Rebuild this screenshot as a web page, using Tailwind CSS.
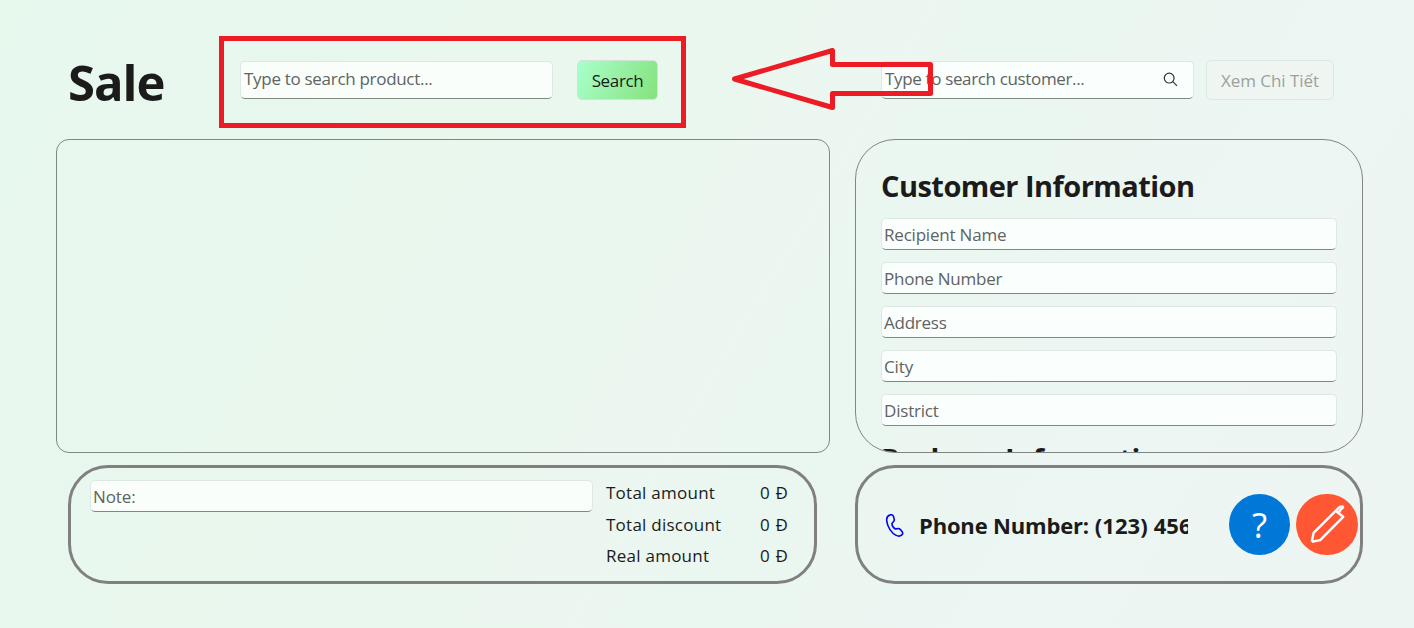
<!DOCTYPE html>
<html lang="en">
<head>
<meta charset="utf-8">
<title>Sale</title>
<script src="https://cdn.jsdelivr.net/npm/@tailwindcss/browser@4"></script>
</head>
<body class="relative h-[628px] w-[1414px] overflow-hidden bg-linear-[120deg,#e7f8ed_0%,#eaf7ee_40%,#ebf6f1_65%,#edf5f3_100%] font-['Open_Sans','Noto_Sans',sans-serif] text-[17px] leading-6 text-[#1b1b1b]">
  <div class="flex gap-[25px] pl-14">
    <main class="w-[774px]">
      <header class="flex h-[139px] pt-9">
        <h1 class="ml-3 w-[151px] pt-[11px] text-[49px] leading-[70px] font-bold tracking-[-1px] whitespace-nowrap">Sale</h1>
        <div class="flex h-[92px] w-[467px] gap-6 border-[5px] border-[#ed1c24] pt-[19px] pl-4">
          <div class="mt-px h-[38px] w-[313px] rounded-[5px] border border-[#dce8e1] border-b-[#7e8883] bg-[#f9fefb] pt-[5px] pl-[3px] whitespace-nowrap text-[#5f6361]"><span class="tracking-[-0.3px]">Type to search product...</span></div>
          <button class="h-10 w-[81px] rounded-[5px] border border-[#cfe4d6] bg-linear-[115deg,#a9ffcb,#85e27d] pt-px text-center"><span class="tracking-[-0.35px]">Search</span></button>
        </div>
      </header>
      <section class="h-[314px] rounded-[13px] border border-[#808682]"></section>
      <section class="mt-3 ml-3 flex h-[119px] w-[749px] rounded-[40px] border-[3px] border-[#808080] pt-3 pl-[19px]">
        <div class="h-8 w-[503px] rounded-[5px] border border-[#dce8e1] border-b-[#7e8883] bg-[#f9fefb] pt-1 pl-[2px] leading-6 text-[#5f6361]"><span class="tracking-[-0.1px]">Note:</span></div>
        <dl class="mt-px ml-[13px] grid h-[95px] w-[183px] grid-cols-[154px_1fr] grid-rows-3 whitespace-nowrap">
          <dt><span class="tracking-[0.25px]">Total amount</span></dt><dd><span class="tracking-[0.7px]">0 Đ</span></dd>
          <dt><span class="tracking-[0.25px]">Total discount</span></dt><dd><span class="tracking-[0.7px]">0 Đ</span></dd>
          <dt><span class="tracking-[0.25px]">Real amount</span></dt><dd><span class="tracking-[0.7px]">0 Đ</span></dd>
        </dl>
      </section>
    </main>

    <aside class="w-[508px]">
      <header class="flex h-[139px] gap-3 pt-[60px] pl-[26px]">
        <div class="mt-px flex h-[38px] w-[313px] justify-between rounded-[5px] border border-[#dce8e1] border-b-[#7e8883] bg-[#fafefd] pt-[5px] pr-[15px] pl-[3px] whitespace-nowrap text-[#5f6361]">
          <span class="tracking-[-0.35px]">Type to search customer...</span>
          <svg class="mt-[5px] size-[15px]" viewBox="0 0 15 15" fill="none" stroke="#333" stroke-width="1.2"><circle cx="6.2" cy="6.1" r="4.9"/><path d="M9.8 9.7 14 13.9"/></svg>
        </div>
        <button class="h-10 w-32 rounded-[5px] border border-[#dce8e2] bg-[#eff6f2] pt-px text-center whitespace-nowrap text-[#9ca09e]" disabled><span class="tracking-[-0.05px]">Xem Chi Tiết</span></button>
      </header>
      <section class="h-[314px] overflow-hidden rounded-[40px] border border-[#808682] pt-[26px] pl-[25px]">
        <h2 class="h-[52px] text-[29px] leading-10 font-bold tracking-[-0.54px] whitespace-nowrap">Customer Information</h2>
        <div class="flex w-[456px] flex-col gap-3 text-[#5f6361]">
          <div class="h-8 rounded-[5px] border border-[#dce8e1] border-b-[#7e8883] bg-[#fafefd] pt-1 pl-[2px]"><span class="tracking-[-0.2px]">Recipient Name</span></div>
          <div class="h-8 rounded-[5px] border border-[#dce8e1] border-b-[#7e8883] bg-[#fafefd] pt-1 pl-[2px]"><span class="tracking-[-0.25px]">Phone Number</span></div>
          <div class="h-8 rounded-[5px] border border-[#dce8e1] border-b-[#7e8883] bg-[#fafefd] pt-1 pl-[2px]"><span class="tracking-[-0.25px]">Address</span></div>
          <div class="h-8 rounded-[5px] border border-[#dce8e1] border-b-[#7e8883] bg-[#fafefd] pt-1 pl-[2px]"><span class="tracking-[-0.1px]">City</span></div>
          <div class="h-8 rounded-[5px] border border-[#dce8e1] border-b-[#7e8883] bg-[#fafefd] pt-1 pl-[2px]"><span class="tracking-[-0.2px]">District</span></div>
        </div>
        <h2 class="mt-[13px] text-[29px] leading-10 font-bold tracking-[-0.4px] whitespace-nowrap">Package Information</h2>
      </section>
      <section class="mt-3 flex h-[119px] items-center rounded-[40px] border-[3px] border-[#808080] pl-[27px]">
        <svg class="mt-[3px] h-6 w-[20px] shrink-0" viewBox="0 0 20 24" fill="none" stroke="#0000ff" stroke-width="1.6" stroke-linejoin="round"><path d="M4.8 1 C6.8 .3 7.8 .8 8.5 2.5 L9.1 4.6 C9.5 6 9.2 7 8.2 8 L7 9.2 C6.8 11.5 8.3 13.9 10.3 15 L12.5 14.6 C13.7 14.3 14.5 14.6 15.4 15.6 L17 17.5 C18 18.8 17.9 19.9 16.8 20.9 C15.2 22.4 13.4 22.5 11.2 21.4 C6.4 19 2.2 12.5 1.7 6.6 C1.4 3.5 2.6 1.8 4.8 1Z"/></svg>
        <p class="ml-[14px] w-[269px] overflow-hidden text-[22px] leading-8 font-bold whitespace-nowrap"><span class="tracking-[-0.18px]">Phone Number:</span><span class="tracking-[0.1px]"> (123) 456-7890</span></p>
        <div class="ml-[41px] grid size-[61px] shrink-0 place-items-center rounded-full bg-[#0078d7] text-[35px] leading-none text-white">?</div>
        <div class="ml-[6px] h-[61px] w-[62px] shrink-0 rounded-full bg-[#ff5733]">
          <svg class="h-[61px] w-[62px]" viewBox="0 0 62 61" fill="none" stroke="#fff" stroke-width="2.4" stroke-linejoin="round"><path d="M15.8 47.7 17.6 38.8 42.9 13.6Q45.2 11.7 47.8 13M39.6 16.8 47.2 22.8 24.2 46.1 15.8 47.7"/><path d="M42.8 18.6 Q43.8 15.4 47.8 13"/></svg>
        </div>
      </section>
    </aside>
  </div>
  <svg class="pointer-events-none absolute top-0 left-0 h-[628px] w-[1414px]" viewBox="0 0 1414 628" fill="none" stroke="#ed1c24" stroke-width="5" stroke-linejoin="round"><path d="M734.5 79 832.5 50.5V64.5H930.5V93.5H832.5V107.5Z"/></svg>
</body>
</html>
